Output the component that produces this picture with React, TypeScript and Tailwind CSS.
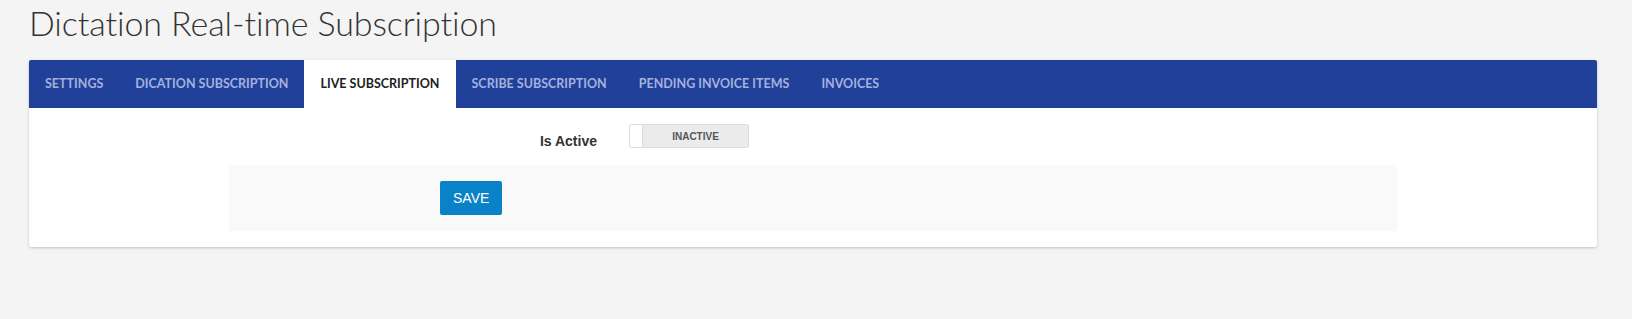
import React from "react";

const tabs = [
  "SETTINGS",
  "DICATION SUBSCRIPTION",
  "LIVE SUBSCRIPTION",
  "SCRIBE SUBSCRIPTION",
  "PENDING INVOICE ITEMS",
  "INVOICES",
];

export default function App() {
  return (
    <div className="min-h-[319px] w-[1632px] bg-[#f4f4f4]">
      <div className="pl-[29px] pt-[3px]">
        <h1 className="h-[57px] font-['Lato',sans-serif] text-[34px] font-light leading-[40px] tracking-[-0.1px] text-[#333]">
          Dictation Real-time Subscription
        </h1>
        <div className="w-[1568px] rounded-[2px] bg-white shadow-[0_1px_3px_rgba(0,0,0,0.2)]">
          <div className="flex h-[48px] rounded-t-[2px] bg-[#21409a] font-['Lato',sans-serif]">
            {tabs.map((t, i) => (
              <div
                key={t}
                className={
                  "flex items-center px-[16px] text-[12.5px] font-bold " +
                  (i === 2 ? "bg-white text-[#222]" : "text-[#a3b1dc]")
                }
              >
                {t}
              </div>
            ))}
          </div>
          <div className="flex flex-col items-center pt-[16px] pb-[16px] font-['Liberation_Sans',Arial,sans-serif]">
            <div className="flex w-[1168px] items-start">
              <div className="w-[368px] pt-[9px] text-right text-[14px] font-bold leading-[16px] text-[#333]">
                Is Active
              </div>
              <div className="ml-[32px] flex h-[24px] w-[120px] overflow-hidden rounded-[2px] border border-[#dcdcdc]">
                <div className="w-[13px] border-r border-[#dcdcdc] bg-white" />
                <div className="flex flex-1 items-center justify-center bg-[#ebebeb] text-[10px] font-bold text-[#555]">
                  INACTIVE
                </div>
              </div>
            </div>
            <div className="mt-[16px] flex w-[1168px] bg-[#f9f9f9] py-[16px] pl-[211px]">
              <button className="h-[34px] rounded-[2px] bg-[#0a82c8] px-[13px] text-[14px] text-white">
                SAVE
              </button>
            </div>
          </div>
        </div>
      </div>
    </div>
  );
}
